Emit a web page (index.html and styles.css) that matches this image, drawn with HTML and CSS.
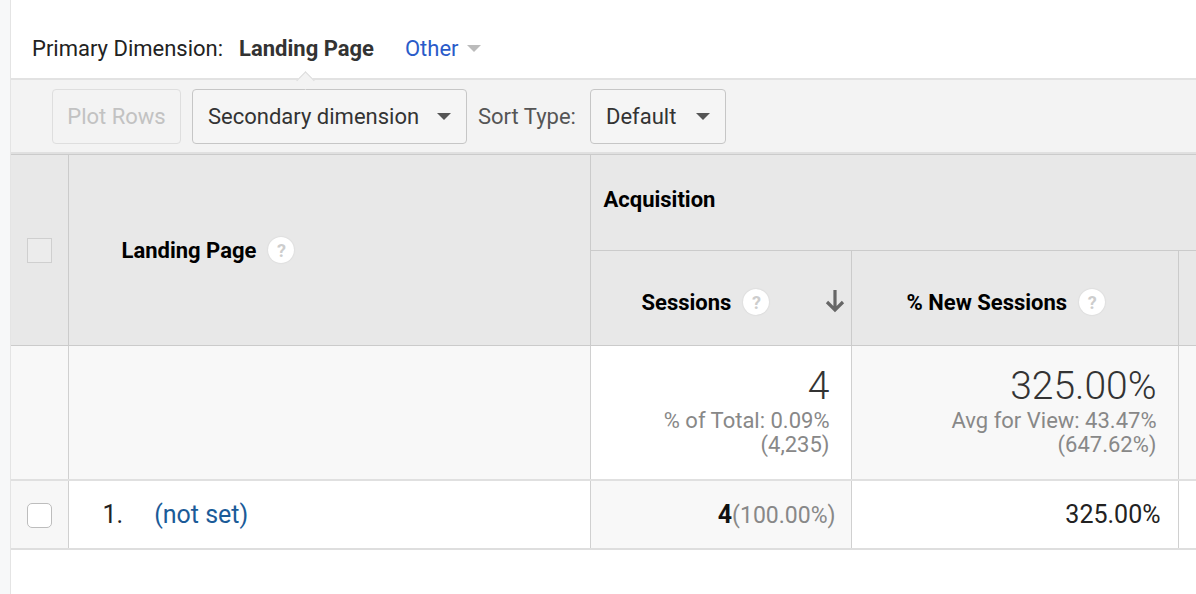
FILE: index.html
```html
<!DOCTYPE html>
<html>
<head>
<meta charset="utf-8">
<link rel="stylesheet" href="styles.css">
</head>
<body>
<div class="page">
  <div class="rail"></div>
  <div class="main">
    <div class="dimbar">
      <span class="dim-label">Primary Dimension:</span>
      <span class="dim-active">Landing Page</span>
      <span class="dim-other">Other <span class="caret caret-light"></span></span>
    </div>
    <div class="toolbar">
      <button class="btn btn-disabled">Plot Rows</button>
      <button class="btn btn-select btn-secondary">Secondary dimension <span class="caret"></span></button>
      <span class="sort-label">Sort Type:</span>
      <button class="btn btn-select btn-default">Default <span class="caret"></span></button>
    </div>
    <table class="grid">
      <colgroup>
        <col class="c-check">
        <col class="c-page">
        <col class="c-sess">
        <col class="c-new">
        <col class="c-rest">
      </colgroup>
      <thead>
        <tr class="h1">
          <th rowspan="2" class="th-check"><span class="box-head"></span></th>
          <th rowspan="2" class="th-page"><span class="hlabel">Landing Page <span class="help">?</span></span></th>
          <th colspan="3" class="th-group">Acquisition</th>
        </tr>
        <tr class="h2">
          <th class="th-sess"><span class="hlabel">Sessions <span class="help">?</span></span>
            <svg class="sort-arrow" viewBox="0 0 22 24" width="22" height="24"><path d="M11 1 V21 M3 13 L11 21 L19 13" fill="none" stroke="#666" stroke-width="3.2"/></svg>
          </th>
          <th class="th-new"><span class="hlabel">% New Sessions <span class="help">?</span></span></th>
          <th class="th-rest"></th>
        </tr>
      </thead>
      <tbody>
        <tr class="totals">
          <td class="t-check"></td>
          <td class="t-page"></td>
          <td class="t-num t-white">
            <div class="big">4</div>
            <div class="sub">% of Total: 0.09%</div>
            <div class="sub">(4,235)</div>
          </td>
          <td class="t-num">
            <div class="big">325.00%</div>
            <div class="sub">Avg for View: 43.47%</div>
            <div class="sub">(647.62%)</div>
          </td>
          <td class="t-rest"></td>
        </tr>
        <tr class="row">
          <td class="r-check"><span class="box"></span></td>
          <td class="r-page"><span class="idx">1.</span><a class="link">(not set)</a></td>
          <td class="r-num r-sorted"><b>4</b><span class="pct">(100.00%)</span></td>
          <td class="r-num r-new">325.00%</td>
          <td class="r-rest"></td>
        </tr>
      </tbody>
    </table>
  </div>
</div>
</body>
</html>
```

FILE: styles.css
```css
* { box-sizing: border-box; }
html, body { margin: 0; padding: 0; background: #fff; }
body { font-family: Roboto, "Liberation Sans", Arial, sans-serif; color: #222; overflow: hidden; }

.page { display: flex; width: 1196px; height: 594px; }
.rail { width: 11px; flex: none; background: #f7f8f9; border-right: 1px solid #e4e4e4; }
.main { flex: 1; min-width: 0; background: #fff; overflow: hidden; }

.dimbar {
  height: 78px;
  display: flex;
  align-items: center;
  padding: 18px 0 0 21px;
  font-size: 22px;
  position: relative;
}
.dim-label { color: #222; }
.dim-active { font-weight: 700; color: #333; margin-left: 16px; position: relative; }
.dim-active::after {
  content: "";
  position: absolute;
  left: 60px;
  top: 38px;
  width: 12px; height: 12px;
  background: #f3f3f3;
  border-left: 1px solid #dcdcdc;
  border-top: 1px solid #dcdcdc;
  transform: rotate(45deg);
}
.dim-other { color: #2a5bc9; margin-left: 31px; display: inline-flex; align-items: center; }

.caret {
  display: inline-block;
  width: 0; height: 0;
  border-left: 7px solid transparent;
  border-right: 7px solid transparent;
  border-top: 7px solid #555;
  margin-left: 16px;
}
.caret-light { border-top-color: #bbb; margin-left: 8px; }

.toolbar {
  height: 76px;
  background: #f3f3f3;
  border-top: 2px solid #e2e2e2;
  border-bottom: 2px solid #e0e0e0;
  display: flex;
  align-items: center;
  padding: 0 0 0 41px;
  gap: 11px;
}
.btn {
  font-family: inherit;
  font-size: 22px;
  height: 55px;
  border-radius: 4px;
  padding: 0 15px;
  display: inline-flex;
  align-items: center;
}
.btn-disabled { width: 129px; color: #c2c2c2; background: #f3f3f3; border: 1px solid #dedede; justify-content: center; padding: 0; }
.btn-select { background: #f5f5f5; border: 1px solid #c6c6c6; color: #333; justify-content: space-between; }
.btn-secondary { width: 275px; }
.btn-default { width: 136px; margin-left: 3px; }
.sort-label { font-size: 22px; color: #555; }

.grid {
  border-collapse: collapse;
  table-layout: fixed;
  width: 1300px;
  border-top: 1px solid #cbcbcb;
}
.c-check { width: 57px; }
.c-page { width: 522px; }
.c-sess { width: 261px; }
.c-new { width: 327px; }
.c-rest { width: 133px; }

.grid th {
  background: #e8e8e8;
  font-weight: 700;
  font-size: 22px;
  color: #000;
  border: 1px solid #cbcbcb;
  text-align: left;
  padding: 0;
}
.grid th.th-check { border-left: none; }
.h1 { height: 96px; }
.h2 { height: 95px; }
.th-check { text-align: center !important; }
.box-head { display: inline-block; width: 25px; height: 25px; border: 1px solid #cfcfcf; background: #ececec; vertical-align: middle; }
.th-page { padding-left: 53px !important; }
.th-group { padding-left: 13px !important; padding-bottom: 6px !important; border-right: none !important; }
.hlabel { display: inline-flex; align-items: center; gap: 12px; }
.help {
  display: inline-flex; align-items: center; justify-content: center;
  width: 26px; height: 26px; border-radius: 50%;
  background: #fff;
  box-shadow: 0 0 2px rgba(0,0,0,0.12);
  color: #cdcdcd; font-size: 18px; font-weight: 700;
}
.th-sess { position: relative; padding-left: 51px !important; padding-top: 8px !important; }
.sort-arrow { position: absolute; right: 5px; top: 38px; }
.th-new { padding-left: 55px !important; padding-top: 8px !important; }
.th-rest { border-right: none !important; }

.grid td { border: 1px solid #d0d0d0; padding: 0; }
.grid td:first-child { border-left: none; }
.totals { height: 134px; }
.totals td { background: #f8f8f8; border-bottom: 2px solid #e0e0e0; }
.totals td.t-white { background: #fff; }
.t-num { text-align: right; padding-right: 21px !important; vertical-align: top; padding-top: 17px !important; }
.big { font-size: 39px; font-weight: 300; color: #333; line-height: 46px; }
.sub { font-size: 22px; color: #888; line-height: 24px; font-weight: 400; }

.row { height: 69px; }
.row td { background: #fff; border-bottom: 2px solid #dedede; font-size: 25px; color: #222; }
.row td.r-check { background: #f7f7f7; text-align: center; }
.box { display: inline-block; width: 25px; height: 25px; border: 1px solid #bdbdbd; border-radius: 5px; background: #fff; vertical-align: middle; }
.r-page { padding-left: 34px !important; }
.idx { color: #222; }
.link { color: #1b5b98; margin-left: 31px; }
.r-num { text-align: right; }
.row td.r-sorted { background: #f8f8f8; padding-right: 15px; }
.r-sorted b { font-weight: 700; color: #111; }
.pct { color: #888; font-size: 23px; }
.r-new { padding-right: 17px !important; }
.t-rest, .r-rest { border-right: none !important; }
```
